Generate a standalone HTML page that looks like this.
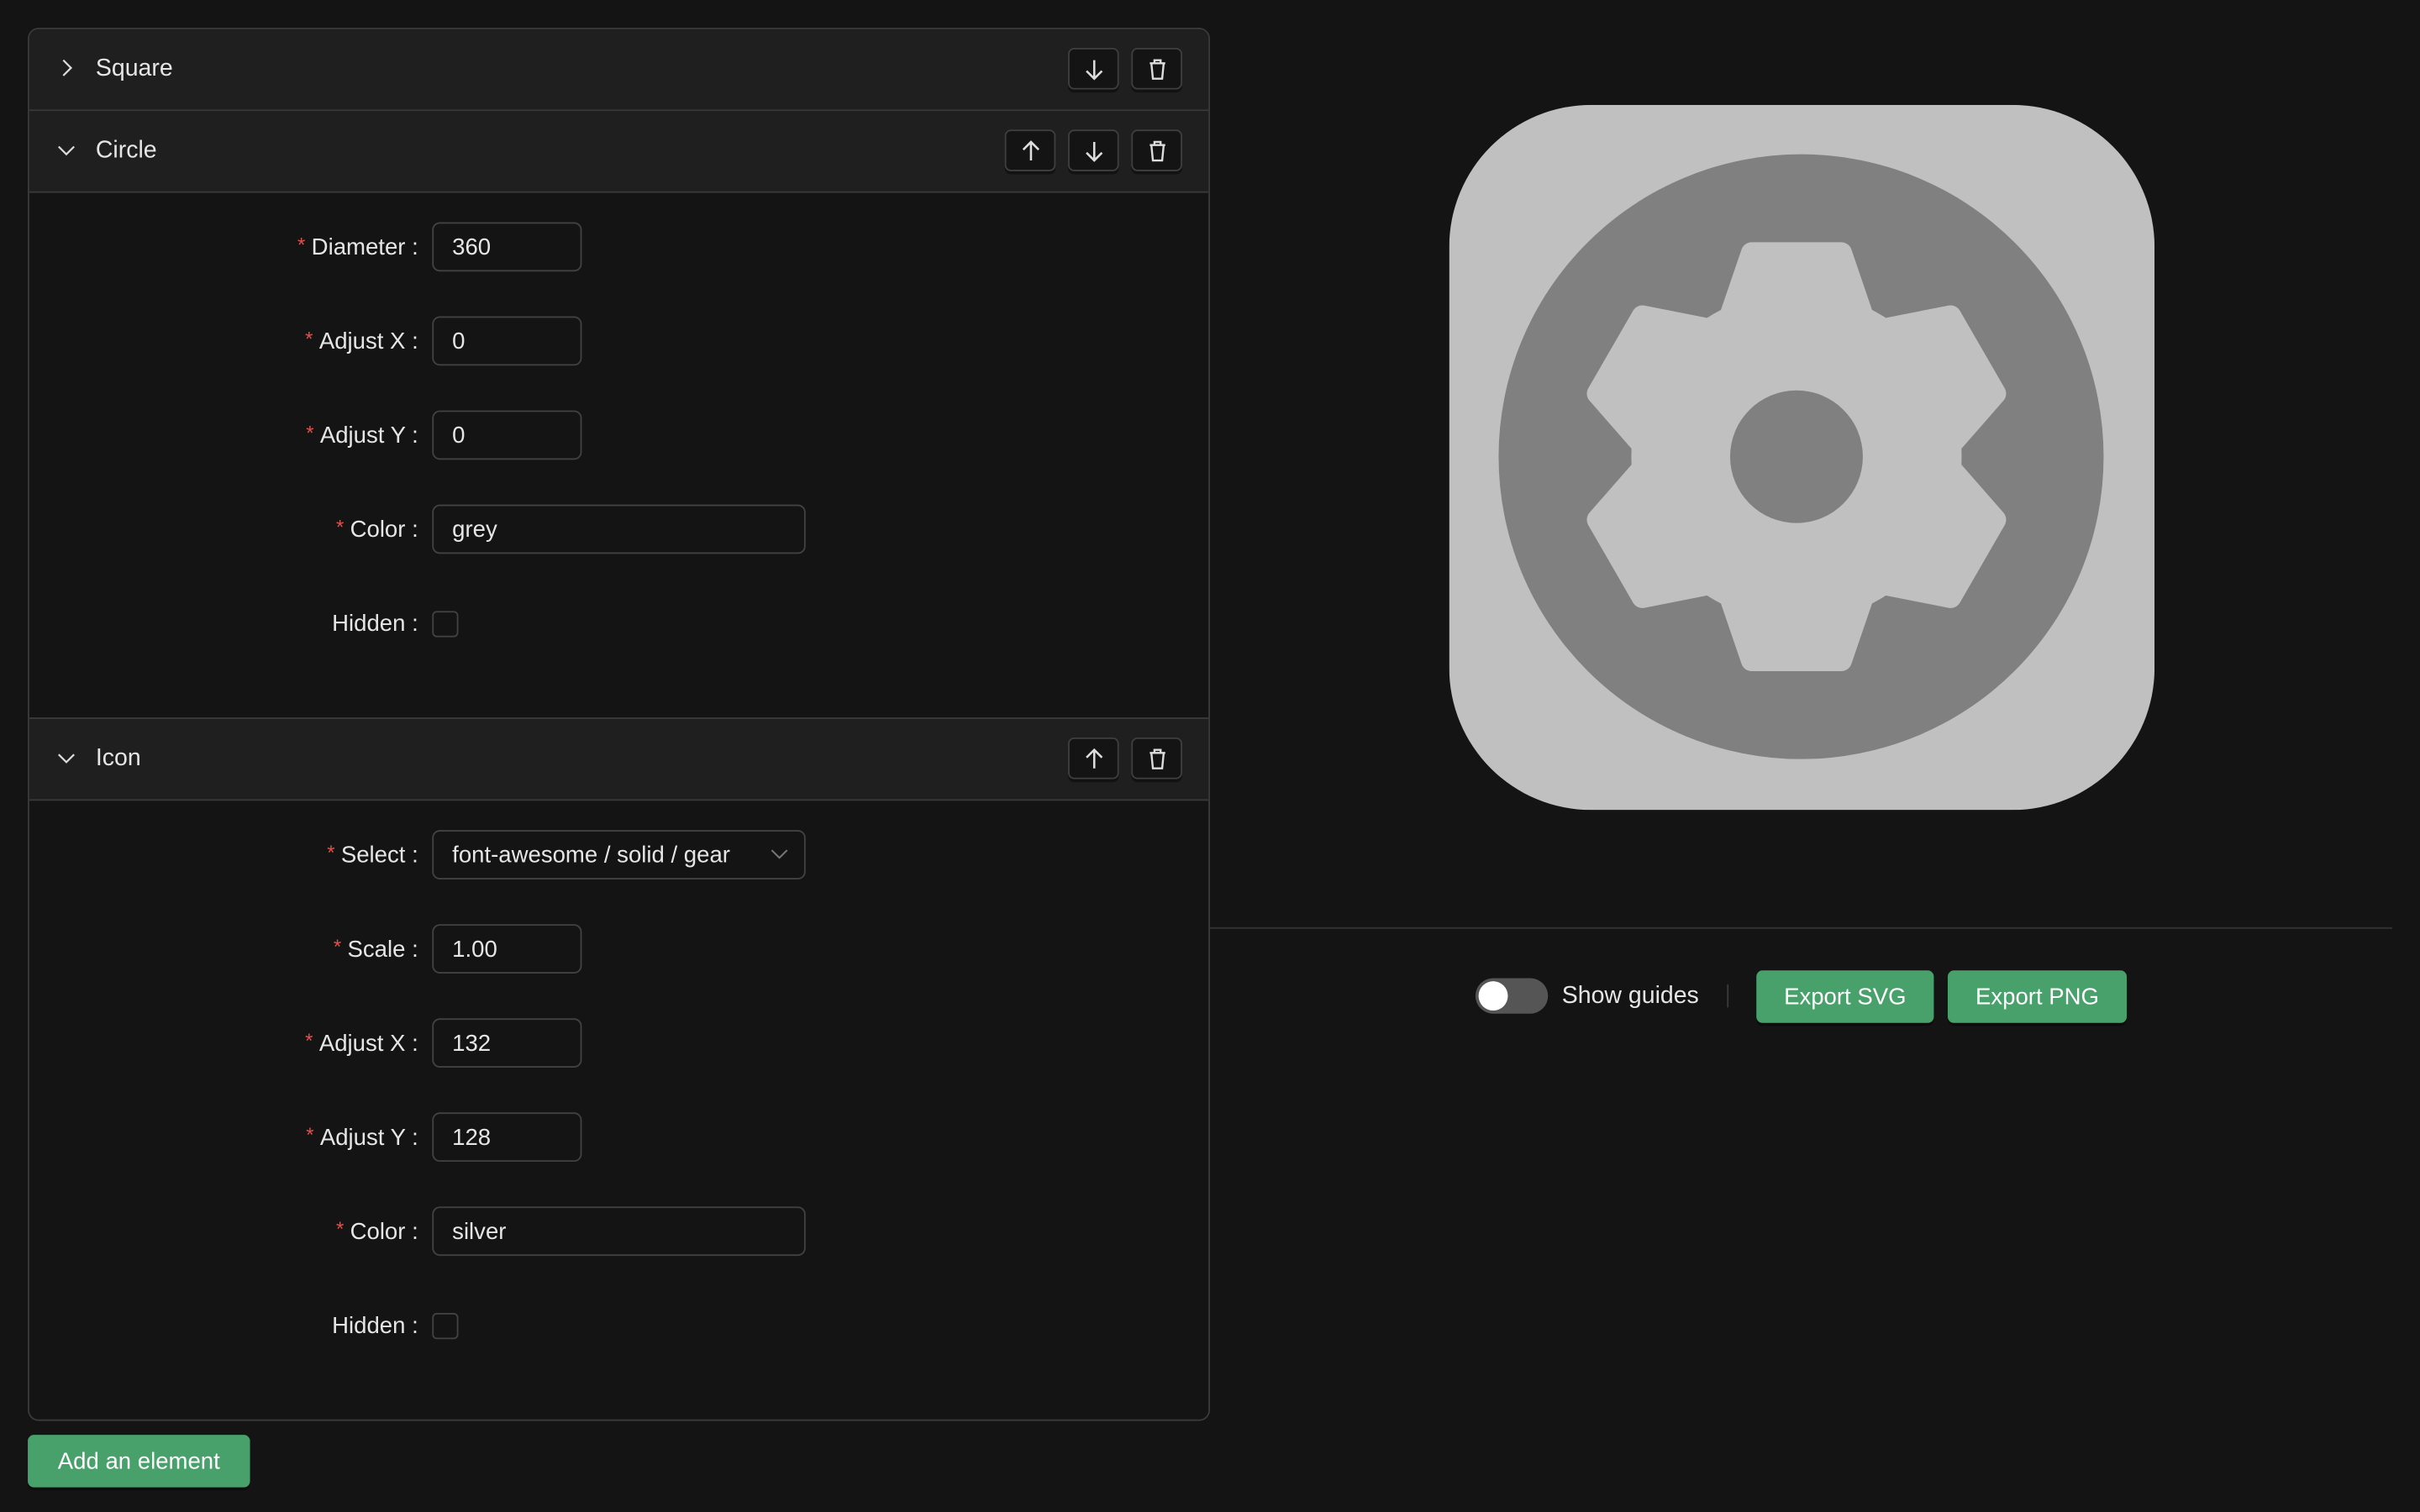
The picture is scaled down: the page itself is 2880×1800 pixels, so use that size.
<!DOCTYPE html>
<html><head><meta charset="utf-8"><style>
html,body{margin:0;padding:0;background:#141414;width:2880px;height:1800px;overflow:hidden}
#w{position:absolute;left:0;top:0;width:1568px;height:980px;transform:scale(1.836735);transform-origin:0 0;font-family:"Liberation Sans",sans-serif;color:#e6e6e6;font-size:15px}
.a{position:absolute}
.panel{left:18px;top:18px;width:764px;height:901px;border:1px solid #3a3a3a;border-radius:7px;overflow:hidden;background:#141414}
.hd{position:absolute;left:0;width:764px;height:52px;background:#1f1f1f;border-bottom:1px solid #3a3a3a}
.hd .t{position:absolute;left:43px;top:17px;font-size:15.5px}
.hd .c{position:absolute;left:17px;top:18px}
.btn{position:absolute;top:12px;width:31px;height:25px;border:1px solid #3f3f3f;border-radius:4px;background:#141414;box-shadow:0 2px 0 rgba(0,0,0,.4)}
.btn svg{position:absolute;left:8px;top:5px}
.lab{position:absolute;text-align:right;width:262px;left:-10px;font-size:15px}
.lab b{color:#d9534f;font-weight:normal;font-size:13px;margin-right:4px;position:relative;top:-2px}
.in{position:absolute;left:261px;height:32px;border:1px solid #424242;border-radius:5px;box-sizing:border-box;padding:7px 12px;font-size:15px;background:#141414}
.cb{position:absolute;left:261px;width:17px;height:17px;border:1px solid #424242;border-radius:3px;box-sizing:border-box}
.g{position:absolute;background:#48a06a;color:#fff;border-radius:4px;font-size:15px;text-align:center;line-height:35px;height:34px;box-shadow:0 2px 0 rgba(0,0,0,.3)}
</style></head><body><div id="w">
<div class="a panel">
 <div class="hd" style="top:0">
  <svg class="c" width="14" height="14" viewBox="0 0 14 14"><path d="M5 2l5 5-5 5" fill="none" stroke="#ddd" stroke-width="1.2"/></svg>
  <div class="t">Square</div>
  <div class="btn" style="left:673px"><svg width="16" height="16" viewBox="0 0 16 16"><path d="M8 2v12M3 9l5 5 5-5" fill="none" stroke="#ddd" stroke-width="1.4"/></svg></div>
  <div class="btn" style="left:714px"><svg width="16" height="16" viewBox="0 0 16 16"><path d="M3 4h10M6 4V2h4v2M4 4l1 10h6l1-10" fill="none" stroke="#ddd" stroke-width="1.3"/></svg></div>
 </div>
 <div class="hd" style="top:53px">
  <svg class="c" width="14" height="14" viewBox="0 0 14 14"><path d="M2 5l5 5 5-5" fill="none" stroke="#ddd" stroke-width="1.2"/></svg>
  <div class="t">Circle</div>
  <div class="btn" style="left:632px"><svg width="16" height="16" viewBox="0 0 16 16"><path d="M8 14V2M3 7l5-5 5 5" fill="none" stroke="#ddd" stroke-width="1.4"/></svg></div>
  <div class="btn" style="left:673px"><svg width="16" height="16" viewBox="0 0 16 16"><path d="M8 2v12M3 9l5 5 5-5" fill="none" stroke="#ddd" stroke-width="1.4"/></svg></div>
  <div class="btn" style="left:714px"><svg width="16" height="16" viewBox="0 0 16 16"><path d="M3 4h10M6 4V2h4v2M4 4l1 10h6l1-10" fill="none" stroke="#ddd" stroke-width="1.3"/></svg></div>
 </div>
 <div class="lab" style="top:133px"><b>*</b>Diameter :</div><div class="in" style="top:125px;width:97px">360</div>
 <div class="lab" style="top:194px"><b>*</b>Adjust X :</div><div class="in" style="top:186px;width:97px">0</div>
 <div class="lab" style="top:255px"><b>*</b>Adjust Y :</div><div class="in" style="top:247px;width:97px">0</div>
 <div class="lab" style="top:316px"><b>*</b>Color :</div><div class="in" style="top:308px;width:242px">grey</div>
 <div class="lab" style="top:377px">Hidden :</div><div class="cb" style="top:377px"></div>
 <div class="hd" style="top:446px;border-top:1px solid #3a3a3a">
  <svg class="c" width="14" height="14" viewBox="0 0 14 14"><path d="M2 5l5 5 5-5" fill="none" stroke="#ddd" stroke-width="1.2"/></svg>
  <div class="t">Icon</div>
  <div class="btn" style="left:673px"><svg width="16" height="16" viewBox="0 0 16 16"><path d="M8 14V2M3 7l5-5 5 5" fill="none" stroke="#ddd" stroke-width="1.4"/></svg></div>
  <div class="btn" style="left:714px"><svg width="16" height="16" viewBox="0 0 16 16"><path d="M3 4h10M6 4V2h4v2M4 4l1 10h6l1-10" fill="none" stroke="#ddd" stroke-width="1.3"/></svg></div>
 </div>
 <div class="lab" style="top:527px"><b>*</b>Select :</div><div class="in" style="top:519px;width:242px">font-awesome / solid / gear<svg style="position:absolute;right:10px;top:11px" width="12" height="8" viewBox="0 0 12 8"><path d="M1 1l5 5 5-5" fill="none" stroke="#777" stroke-width="1.1"/></svg></div>
 <div class="lab" style="top:588px"><b>*</b>Scale :</div><div class="in" style="top:580px;width:97px">1.00</div>
 <div class="lab" style="top:649px"><b>*</b>Adjust X :</div><div class="in" style="top:641px;width:97px">132</div>
 <div class="lab" style="top:710px"><b>*</b>Adjust Y :</div><div class="in" style="top:702px;width:97px">128</div>
 <div class="lab" style="top:771px"><b>*</b>Color :</div><div class="in" style="top:763px;width:242px">silver</div>
 <div class="lab" style="top:832px">Hidden :</div><div class="cb" style="top:832px"></div>
</div>
<div class="g" style="left:18px;top:930px;width:144px">Add an element</div>

<svg class="a" style="left:939px;top:68px" width="457" height="457" viewBox="0 0 457 457">
 <rect width="457" height="457" rx="92" fill="#c0c0c0"/>
 <circle cx="228" cy="228" r="196" fill="#808080"/>
 <defs><path id="t" d="M-29,-132 L29,-132 L44,-88 L-44,-88 Z"/></defs>
 <g transform="translate(225,228)" fill="#c0c0c0" stroke="#c0c0c0" stroke-width="14" stroke-linejoin="round">
  <circle r="100"/>
  <use href="#t"/>
  <use href="#t" transform="rotate(60)"/>
  <use href="#t" transform="rotate(120)"/>
  <use href="#t" transform="rotate(180)"/>
  <use href="#t" transform="rotate(240)"/>
  <use href="#t" transform="rotate(300)"/>
  <circle r="43" fill="#808080" stroke="none"/>
 </g>
</svg>
<div class="a" style="left:784px;top:601px;width:766px;height:1px;background:#333"></div>
<div class="a" style="left:956px;top:634px;width:47px;height:23px;border-radius:12px;background:#555"></div>
<div class="a" style="left:958px;top:636px;width:19px;height:19px;border-radius:50%;background:#fff"></div>
<div class="a" style="left:1012px;top:637px;font-size:15.5px">Show guides</div>
<div class="a" style="left:1119px;top:638px;width:1px;height:15px;background:#3a3a3a"></div>
<div class="g" style="left:1138px;top:629px;width:115px">Export SVG</div>
<div class="g" style="left:1262px;top:629px;width:116px">Export PNG</div>
</div></body></html>
